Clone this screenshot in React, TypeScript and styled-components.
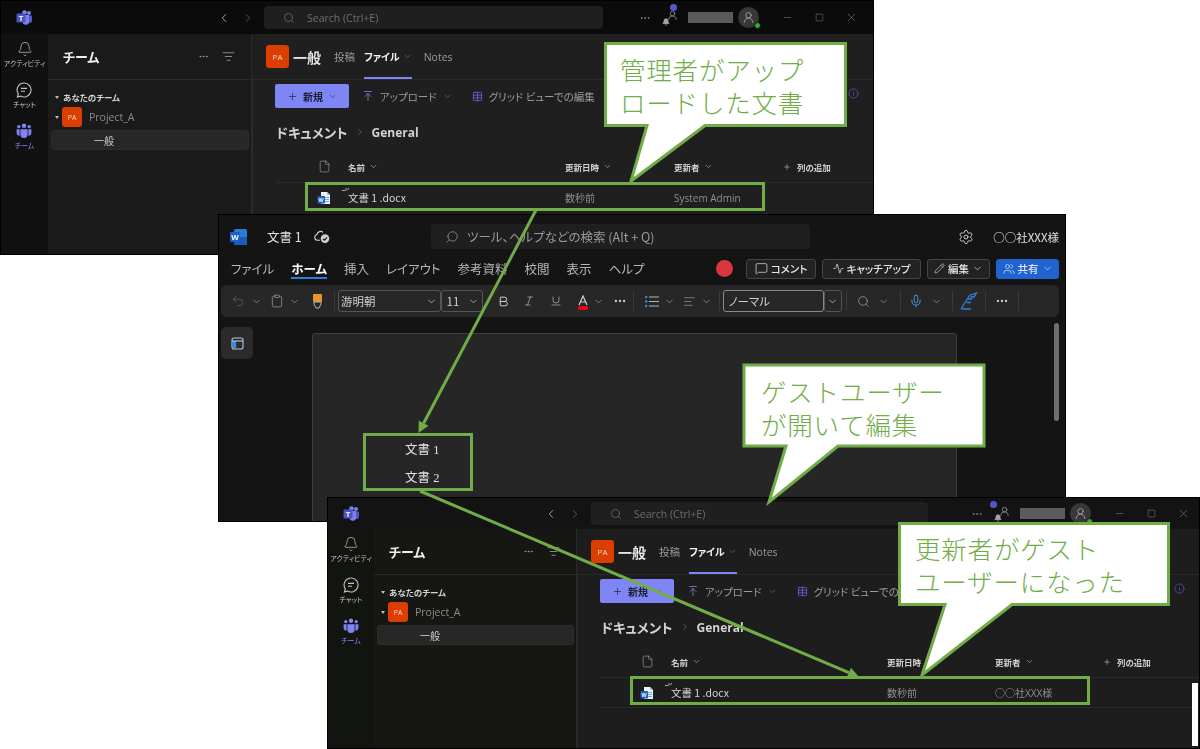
import React from "react";
import styled, { createGlobalStyle } from "styled-components";
import {
  AlignLeft, ArrowUpToLine, Bold, ChevronDown, ChevronLeft, ChevronRight, Clipboard, File, Info, Italic,
  List, MessageSquare, Mic, Minus, MoreHorizontal, Pencil, Plus, Search, Settings, Square, Table,
  Underline, Undo2, UserRound, Users, X, ListFilter, Bell, Activity,
} from "lucide-react";

const GREEN = "#70ad47";
const FONT = `"Noto Sans CJK JP", "Noto Sans", sans-serif`;
const LATIN = `"Open Sans", "Noto Sans CJK JP", sans-serif`;

const Global = createGlobalStyle`
  html, body { margin: 0; padding: 0; background: #fff; overflow: hidden; }
  * { box-sizing: border-box; }
  body { font-family: ${LATIN}; font-feature-settings: "palt"; }
`;

const Stage = styled.div`
  position: relative;
  width: 1200px;
  height: 749px;
  background: #fff;
  overflow: hidden;
`;

const Win = styled.div<{ $x: number; $y: number; $w: number; $h: number; $z: number; $bg: string }>`
  position: absolute;
  left: ${(p) => p.$x}px;
  top: ${(p) => p.$y}px;
  width: ${(p) => p.$w}px;
  height: ${(p) => p.$h}px;
  z-index: ${(p) => p.$z};
  background: ${(p) => p.$bg};
  border: 1px solid #000;
  display: flex;
  flex-direction: column;
  overflow: hidden;
  filter: blur(0.35px);
  color: #d6d6d6;
`;

/* ---------- Teams ---------- */
type Palette = {
  title: string; rail: string; side: string; main: string; line: string;
};
const Titlebar = styled.div<{ $h: number; $bg: string; $right: number }>`
  position: relative;
  flex: 0 0 ${(p) => p.$h}px;
  background: ${(p) => p.$bg};
  display: flex;
  align-items: center;
  padding: 0 ${(p) => p.$right}px 0 15px;
  color: #8d8d8d;
`;
const LogoSlot = styled.div`
  width: 196px;
  display: flex;
  align-items: center;
`;
const NavBtn = styled.div<{ $dim?: boolean }>`
  width: 24px;
  display: flex;
  justify-content: center;
  color: ${(p) => (p.$dim ? "#5f5f5f" : "#b5b5b5")};
`;
const TeamsSearch = styled.div<{ $w: number }>`
  width: ${(p) => p.$w}px;
  height: 23px;
  margin-left: 4px;
  background: #1f1f1f;
  border-radius: 4px;
  display: flex;
  align-items: center;
  padding-left: 19px;
  gap: 12px;
  font-size: 10.5px;
  color: #6f6f6f;
`;
const TitleTools = styled.div`
  margin-left: auto;
  display: flex;
  align-items: center;
`;
const Dot = styled.span<{ $r: number }>`
  position: absolute;
  top: 3px;
  right: ${(p) => p.$r}px;
  width: 7px;
  height: 7px;
  border-radius: 50%;
  background: #5558c6;
`;
const BellUser = styled.div`
  position: relative;
  width: 16px;
  height: 18px;
  margin-left: 11px;
  color: #a8a8a8;
`;
const NameBlock = styled.div`
  width: 45px;
  height: 11px;
  margin-left: 10px;
  background: #5b5b5b;
`;
const AvatarRound = styled.div`
  position: relative;
  width: 21px;
  height: 21px;
  margin-left: 5px;
  margin-right: 12px;
  border-radius: 50%;
  background: #383838;
  color: #b4b4b4;
  display: flex;
  align-items: center;
  justify-content: center;
`;
const Status = styled.span`
  position: absolute;
  right: -2px;
  bottom: -1px;
  width: 7px;
  height: 7px;
  border-radius: 50%;
  background: #2fae3a;
  border: 1px solid #111;
`;
const WinBtn = styled.div`
  width: 32px;
  display: flex;
  justify-content: center;
  color: #7c7c7c;
`;
const Body = styled.div`
  flex: 1;
  display: flex;
  min-height: 0;
`;
const Rail = styled.div<{ $w: number; $bg: string }>`
  flex: 0 0 ${(p) => p.$w}px;
  background: ${(p) => p.$bg};
  display: flex;
  flex-direction: column;
  align-items: center;
  padding-top: 7px;
`;
const RailItem = styled.div<{ $on?: boolean }>`
  height: 41px;
  display: flex;
  flex-direction: column;
  align-items: center;
  gap: 1px;
  color: ${(p) => (p.$on ? "#7f85f5" : "#c4c4c4")};
  white-space: nowrap;
  font-family: ${FONT};
  font-size: 7px;
  line-height: 10px;
`;
const Sidebar = styled.div<{ $w: number; $bg: string; $line: string }>`
  flex: 0 0 ${(p) => p.$w}px;
  background: ${(p) => p.$bg};
  border-right: 1px solid ${(p) => p.$line};
  display: flex;
  flex-direction: column;
`;
const SideHead = styled.div<{ $line: string }>`
  flex: 0 0 46px;
  display: flex;
  align-items: center;
  padding: 0 16px 0 15px;
  border-bottom: 1px solid ${(p) => p.$line};
  color: #aaa;
`;
const SideTitle = styled.div`
  flex: 1;
  font-family: ${FONT};
  font-weight: 700;
  font-size: 13px;
  color: #eee;
`;
const SideTools = styled.div`
  display: flex;
  align-items: center;
  gap: 13px;
`;
const SectionLabel = styled.div`
  margin: 10px 0 0 7px;
  height: 14px;
  display: flex;
  align-items: center;
  gap: 4px;
  font-family: ${FONT};
  font-size: 8.5px;
  font-weight: 700;
  color: #d4d4d4;
`;
const Caret = styled.span`
  width: 0;
  height: 0;
  border-left: 2.5px solid transparent;
  border-right: 2.5px solid transparent;
  border-top: 3.5px solid #bdbdbd;
`;
const TeamRow = styled.div`
  margin: 3px 0 0 7px;
  display: flex;
  align-items: center;
  gap: 3px;
  font-size: 10.5px;
  color: #8b8b8b;
`;
const PaBadge = styled.div<{ $s: number }>`
  width: ${(p) => p.$s}px;
  height: ${(p) => p.$s}px;
  flex: none;
  margin-right: 4px;
  border-radius: 3px;
  background: #dc3e00;
  color: #f5d8c8;
  font-size: ${(p) => (p.$s > 21 ? 8 : 7)}px;
  display: flex;
  align-items: center;
  justify-content: center;
`;
const Channel = styled.div`
  margin: 3px 2px 0 3px;
  height: 20px;
  background: #272727;
  border: 1px solid #2d2d2d;
  border-radius: 3px;
  padding-left: 42px;
  display: flex;
  align-items: center;
  font-family: ${FONT};
  font-size: 10px;
  color: #cfcfcf;
`;
const Main = styled.div<{ $bg: string }>`
  flex: 1;
  min-width: 0;
  background: ${(p) => p.$bg};
  display: flex;
  flex-direction: column;
`;
const MainHead = styled.div<{ $line: string }>`
  position: relative;
  flex: 0 0 46px;
  display: flex;
  align-items: center;
  padding-left: 14px;
  border-bottom: 1px solid ${(p) => p.$line};
`;
const ChannelName = styled.div`
  font-family: ${FONT};
  font-weight: 700;
  font-size: 14px;
  color: #e6e6e6;
  margin-right: 13px;
`;
const Tab = styled.div<{ $on?: boolean; $lat?: boolean }>`
  position: relative;
  height: 100%;
  display: flex;
  align-items: center;
  gap: 3px;
  margin-right: ${(p) => (p.$on ? 12 : 9)}px;
  font-family: ${(p) => (p.$lat ? LATIN : FONT)};
  font-weight: ${(p) => (p.$on ? 700 : 400)};
  font-size: ${(p) => (p.$on ? 10 : 10.5)}px;
  color: ${(p) => (p.$on ? "#f2f2f2" : "#9a9a9a")};
  &::after {
    content: "";
    display: ${(p) => (p.$on ? "block" : "none")};
    position: absolute;
    left: 0;
    right: 0;
    bottom: 0;
    height: 2px;
    background: #7f85f5;
  }
`;
const MainBody = styled.div<{ $line: string }>`
  position: relative;
  flex: 1;
  border-left: 1px solid ${(p) => p.$line};
  padding-left: 22px;
  padding-top: 4px;
  min-height: 0;
`;
const CmdBar = styled.div`
  height: 24px;
  display: flex;
  align-items: center;
  font-family: ${FONT};
  font-size: 10.5px;
  color: #9b9b9b;
`;
const NewBtn = styled.div`
  width: 74px;
  height: 24px;
  background: #7f85f5;
  border-radius: 2px;
  color: #1c1c2c;
  display: flex;
  align-items: center;
  justify-content: center;
  gap: 5px;
  font-weight: 700;
  font-size: 10px;
  margin-right: 13px;
`;
const CmdGroup = styled.div<{ $c?: string; $mr?: number }>`
  display: flex;
  align-items: center;
  gap: 6px;
  margin-right: ${(p) => p.$mr ?? 21}px;
  white-space: nowrap;
  svg:first-child { color: ${(p) => p.$c ?? "inherit"}; }
`;
const InfoMark = styled.div`
  position: absolute;
  right: 14px;
  top: 8px;
  color: #5b5fc7;
  display: flex;
`;
const Crumbs = styled.div`
  margin-top: 14px;
  height: 20px;
  display: flex;
  align-items: center;
  gap: 7px;
  font-weight: 700;
  color: #d2d2d2;
`;
const CrumbMain = styled.span`
  font-family: ${FONT};
  font-size: 13.5px;
  margin-left: 1px;
`;
const CrumbSub = styled.span`
  font-size: 12px;
`;
const Grid = styled.div<{ $cols: string; $h: number; $line: string; $mt?: number }>`
  display: grid;
  grid-template-columns: ${(p) => p.$cols};
  height: ${(p) => p.$h}px;
  margin-top: ${(p) => p.$mt ?? 0}px;
  align-items: center;
  border-bottom: 1px solid ${(p) => p.$line};
  white-space: nowrap;
`;
const HeadCell = styled.div`
  display: flex;
  align-items: center;
  gap: 4px;
  font-family: ${FONT};
  font-weight: 700;
  font-size: 8.5px;
  color: #d0d0d0;
`;
const IconCell = styled.div`
  justify-self: end;
  padding-right: 17px;
  display: flex;
  color: #a9a9a9;
`;
const FileCell = styled.div`
  position: relative;
  font-family: ${FONT};
  font-size: 10.5px;
  color: #d6d6d6;
`;
const Cell = styled.div`
  font-size: 10px;
  color: #8f8f8f;
  font-family: ${LATIN};
`;
const Spark = styled.svg`
  position: absolute;
  left: -6px;
  top: -2px;
`;
const Scroller = styled.div`
  position: absolute;
  right: 1px;
  top: 108px;
  bottom: 2px;
  width: 6px;
  background: #fff;
`;

const TeamsLogo = () => (
  <svg width="17" height="15" viewBox="0 0 17 15">
    <circle cx="13" cy="3" r="2" fill="#7b83eb" />
    <circle cx="8.5" cy="2.5" r="2.3" fill="#7b83eb" />
    <path d="M11 5.5h5v5a2.5 2.5 0 0 1-5 0z" fill="#5059c9" />
    <path d="M5 5h8v6.5a3.2 3.2 0 0 1-6.4 0z" fill="#7b83eb" />
    <rect x="0.5" y="3.5" width="9" height="9" rx="1" fill="#4b53bc" />
    <text x="5" y="10.8" fontSize="7.5" fontWeight="700" fill="#fff" textAnchor="middle" fontFamily="Liberation Sans">T</text>
  </svg>
);
const WordFile = () => (
  <svg width="14" height="14" viewBox="0 0 14 14">
    <path d="M4 1h6l3 3v9H4z" fill="#eef3fa" />
    <path d="M10 1l3 3h-3z" fill="#9cc3ee" />
    <rect x="7" y="6" width="5" height="1" fill="#6fa5de" />
    <rect x="7" y="8" width="5" height="1" fill="#6fa5de" />
    <rect x="7" y="10" width="5" height="1" fill="#6fa5de" />
    <rect x="0.5" y="5" width="7.5" height="7.5" rx="1" fill="#1c5fc0" />
    <text x="4.2" y="10.8" fontSize="5.5" fontWeight="700" fill="#fff" textAnchor="middle" fontFamily="Liberation Sans">W</text>
  </svg>
);
const ChatIcon = () => (
  <svg width="16" height="16" viewBox="0 0 16 16" fill="none" stroke="currentColor" strokeWidth="1.1">
    <path d="M8 1a7 7 0 1 1-3.4 13.1L1.4 15l.9-3.1A7 7 0 0 1 8 1z" />
    <path d="M5 6.4h6M5 9.2h4" />
  </svg>
);
const PeopleIcon = () => (
  <svg width="16" height="16" viewBox="0 0 16 16" fill="currentColor">
    <circle cx="8" cy="2.8" r="2.2" />
    <circle cx="2.8" cy="3.6" r="1.7" />
    <circle cx="13.2" cy="3.6" r="1.7" />
    <path d="M4.4 6.3h7.2v5.2a3.6 3.6 0 0 1-7.2 0z" />
    <path d="M0.6 6.3h3v4.8c0 .6.1 1 .2 1.4A2.9 2.9 0 0 1 .6 9.7zM12.4 6.3h3v3.4a2.9 2.9 0 0 1-3.2 2.8c.1-.4.2-.8.2-1.4z" />
  </svg>
);

type TeamsProps = {
  x: number; y: number; w: number; h: number; z: number; titleH: number; rightPad: number;
  railW: number; sideW: number; searchW: number; cols: string; palette: Palette; dotR: number;
  editor: string; dateChevron: boolean; scroller?: boolean; rowLine?: boolean;
};

const TeamsWindow: React.FC<TeamsProps> = (p) => {
  const { palette: c } = p;
  return (
    <Win $x={p.x} $y={p.y} $w={p.w} $h={p.h} $z={p.z} $bg={c.main}>
      <Titlebar $h={p.titleH} $bg={c.title} $right={p.rightPad}>
        <LogoSlot><TeamsLogo /></LogoSlot>
        <NavBtn><ChevronLeft size={14} strokeWidth={1.5} /></NavBtn>
        <NavBtn $dim><ChevronRight size={14} strokeWidth={1.5} /></NavBtn>
        <TeamsSearch $w={p.searchW}>
          <Search size={12} strokeWidth={1.5} />
          <span>Search (Ctrl+E)</span>
        </TeamsSearch>
        <TitleTools>
          <MoreHorizontal size={12} strokeWidth={1.5} />
          <BellUser>
            <UserRound size={11} strokeWidth={1.5} style={{ position: "absolute", right: 0, top: 1 }} />
            <Bell size={8} strokeWidth={2} fill="currentColor" style={{ position: "absolute", left: 0, bottom: 1 }} />
          </BellUser>
          <NameBlock />
          <AvatarRound>
            <UserRound size={13} strokeWidth={1.4} />
            <Status />
          </AvatarRound>
          <WinBtn><Minus size={11} strokeWidth={1.3} /></WinBtn>
          <WinBtn><Square size={9} strokeWidth={1.4} /></WinBtn>
          <WinBtn><X size={13} strokeWidth={1.2} /></WinBtn>
        </TitleTools>
        <Dot $r={p.dotR} />
      </Titlebar>
      <Body>
        <Rail $w={p.railW} $bg={c.rail}>
          <RailItem><Bell size={16} strokeWidth={1.1} />アクティビティ</RailItem>
          <RailItem><ChatIcon />チャット</RailItem>
          <RailItem $on><PeopleIcon />チーム</RailItem>
        </Rail>
        <Sidebar $w={p.sideW} $bg={c.side} $line={c.line}>
          <SideHead $line={c.line}>
            <SideTitle>チーム</SideTitle>
            <SideTools>
              <MoreHorizontal size={11} strokeWidth={1.6} />
              <ListFilter size={13} strokeWidth={1.4} />
            </SideTools>
          </SideHead>
          <SectionLabel><Caret />あなたのチーム</SectionLabel>
          <TeamRow><Caret /><PaBadge $s={20}>PA</PaBadge>Project_A</TeamRow>
          <Channel>一般</Channel>
        </Sidebar>
        <Main $bg={c.main}>
          <MainHead $line={c.line}>
            <PaBadge $s={23}>PA</PaBadge>
            <ChannelName>一般</ChannelName>
            <Tab>投稿</Tab>
            <Tab $on>ファイル<ChevronDown size={9} strokeWidth={1.2} color="#a0a0a0" /></Tab>
            <Tab $lat>Notes</Tab>
          </MainHead>
          <MainBody $line={c.line}>
            <CmdBar>
              <NewBtn><Plus size={11} strokeWidth={1.4} />新規<ChevronDown size={9} strokeWidth={1.3} /></NewBtn>
              <CmdGroup $c="#8f94f8" $mr={20}><ArrowUpToLine size={12} strokeWidth={1.4} />アップロード<ChevronDown size={9} strokeWidth={1.2} /></CmdGroup>
              <CmdGroup $c="#6a70e6"><Table size={11} strokeWidth={1.6} />グリッド ビューでの編集</CmdGroup>
            </CmdBar>
            <InfoMark><Info size={11} strokeWidth={1.5} /></InfoMark>
            <Crumbs>
              <CrumbMain>ドキュメント</CrumbMain>
              <ChevronRight size={10} strokeWidth={1.2} color="#8a8a8a" />
              <CrumbSub>General</CrumbSub>
            </Crumbs>
            <Grid $cols={p.cols} $h={32} $line={c.line} $mt={9}>
              <IconCell><File size={13} strokeWidth={1.1} /></IconCell>
              <HeadCell>名前<ChevronDown size={9} strokeWidth={1.4} /></HeadCell>
              <HeadCell>更新日時{p.dateChevron && <ChevronDown size={9} strokeWidth={1.4} />}</HeadCell>
              <HeadCell>更新者<ChevronDown size={9} strokeWidth={1.4} /></HeadCell>
              <HeadCell><Plus size={8} strokeWidth={1.6} />&nbsp;列の追加</HeadCell>
            </Grid>
            <Grid $cols={p.cols} $h={30} $line={p.rowLine ? c.line : "transparent"}>
              <IconCell><WordFile /></IconCell>
              <FileCell>
                <Spark width="8" height="7" viewBox="0 0 8 7" stroke="#cfcfcf" strokeWidth="0.8">
                  <path d="M0 2.5h3.5M7 0L5 2.5M4 0v2" fill="none" />
                </Spark>
                文書 1 .docx
              </FileCell>
              <Cell>数秒前</Cell>
              <Cell>{p.editor}</Cell>
              <div />
            </Grid>
            {p.scroller && <Scroller />}
          </MainBody>
        </Main>
      </Body>
    </Win>
  );
};

/* ---------- Word ---------- */
const WTitle = styled.div`
  flex: 0 0 43px;
  display: flex;
  align-items: center;
  font-family: ${FONT};
`;
const WDocName = styled.div`
  width: 212px;
  display: flex;
  align-items: center;
  padding-left: 11px;
  gap: 20px;
  font-size: 12.5px;
  color: #e2e2e2;
`;
const WCloud = styled.svg`
  margin-left: -8px;
`;
const WSearch = styled.div`
  width: 379px;
  height: 25px;
  background: #1f1f1f;
  border-radius: 4px;
  display: flex;
  align-items: center;
  padding-left: 14px;
  gap: 8px;
  font-size: 12.5px;
  color: #9a9a9a;
`;
const WUser = styled.div`
  margin-left: auto;
  padding-right: 6px;
  display: flex;
  align-items: center;
  gap: 19px;
  font-size: 11.5px;
  color: #e0e0e0;
`;
const WTabs = styled.div`
  flex: 0 0 21px;
  display: flex;
  align-items: center;
  padding: 0 6px 0 12px;
  gap: 17px;
  font-family: ${FONT};
  font-size: 12.5px;
  color: #b6b6b6;
`;
const WTab = styled.div<{ $on?: boolean }>`
  position: relative;
  color: ${(p) => (p.$on ? "#fff" : "inherit")};
  font-weight: ${(p) => (p.$on ? 700 : 400)};
  white-space: nowrap;
  &::after {
    content: "";
    display: ${(p) => (p.$on ? "block" : "none")};
    position: absolute;
    left: 0;
    right: 0;
    bottom: -1px;
    height: 2px;
    background: #2a7de1;
  }
`;
const WActions = styled.div`
  margin-left: auto;
  display: flex;
  align-items: center;
  gap: 6px;
`;
const RecDot = styled.span`
  width: 17px;
  height: 17px;
  border-radius: 50%;
  background: #d9363e;
  margin-right: 7px;
`;
const WBtn = styled.div<{ $w: number; $primary?: boolean }>`
  width: ${(p) => p.$w}px;
  height: 20px;
  border-radius: 3px;
  border: 1px solid ${(p) => (p.$primary ? "#1f63d0" : "#444")};
  background: ${(p) => (p.$primary ? "#1f63d0" : "#222")};
  color: #e4e4e4;
  font-size: 10.5px;
  font-weight: 500;
  display: flex;
  align-items: center;
  justify-content: center;
  gap: 3px;
`;
const Ribbon = styled.div`
  flex: 0 0 32px;
  margin: 6px 6px 0 2px;
  background: #272727;
  border-radius: 6px;
  display: flex;
  align-items: center;
  padding-left: 8px;
  color: #a2a2a2;
`;
const Slot = styled.div<{ $w: number; $ml?: number; $c?: string }>`
  flex: 0 0 ${(p) => p.$w}px;
  margin-left: ${(p) => p.$ml ?? 0}px;
  display: flex;
  justify-content: center;
  color: ${(p) => p.$c ?? "inherit"};
`;
const Sep = styled.span<{ $ml?: number }>`
  flex: none;
  width: 1px;
  height: 20px;
  margin-left: ${(p) => p.$ml ?? 0}px;
  background: #3a3a3a;
`;
const FieldBox = styled.div<{ $w: number; $strong?: boolean; $ml?: number }>`
  flex: 0 0 ${(p) => p.$w}px;
  height: 22px;
  margin-left: ${(p) => p.$ml ?? 0}px;
  border: ${(p) => (p.$strong ? "1.5px solid #8a8a8a" : "1px solid #555")};
  border-radius: 3px;
  display: flex;
  align-items: center;
  justify-content: space-between;
  padding: 0 3px 0 2px;
  font-family: ${FONT};
  font-size: 11.5px;
  color: #cfcfcf;
`;
const Letter = styled.div`
  position: relative;
  display: flex;
  color: #cfcfcf;
`;
const RedBar = styled.span`
  position: absolute;
  left: 1px;
  right: 1px;
  bottom: -3px;
  height: 4px;
  border-radius: 1px;
  background: #e60012;
`;
const WBody = styled.div`
  position: relative;
  flex: 1;
  display: flex;
  min-height: 0;
`;
const PaneBtn = styled.div`
  flex: none;
  width: 32px;
  height: 32px;
  margin: 10px 0 0 2px;
  background: #2b2b2b;
  border-radius: 5px;
  color: #a9c6e6;
  display: flex;
  align-items: center;
  justify-content: center;
`;
const Page = styled.div`
  width: 645px;
  height: 300px;
  margin: 16px 0 0 59px;
  background: #262626;
  border: 1px solid #3f3f3f;
  border-radius: 3px 3px 0 0;
  padding: 102px 0 0 92px;
  font-family: "Liberation Serif", "Noto Sans CJK JP", serif;
  font-size: 12.5px;
  line-height: 28px;
  color: #e2e2e2;
`;
const WScroll = styled.div`
  position: absolute;
  right: 6px;
  top: 6px;
  width: 5px;
  height: 98px;
  border-radius: 3px;
  background: #6e6e6e;
`;

const WordLogo = () => (
  <svg width="17" height="16" viewBox="0 0 17 16">
    <rect x="4" y="0" width="13" height="16" rx="1.5" fill="#2b7cd3" />
    <rect x="4" y="8" width="13" height="8" fill="#185abd" />
    <rect x="0" y="3" width="10" height="10" rx="1" fill="#1a5fc4" />
    <text x="5" y="11" fontSize="8" fontWeight="700" fill="#fff" textAnchor="middle" fontFamily="Liberation Sans">W</text>
  </svg>
);
const Chev = ({ s = 11 }: { s?: number }) => <ChevronDown size={s} strokeWidth={1.5} />;
const Quill = () => (
  <svg width="18" height="18" viewBox="0 0 18 18" fill="none" stroke="#2f7fdc" strokeWidth="1.3">
    <path d="M1 17L9.5 3.5 16.5 1 14 5h-3.5M12.5 7H8M11 10.5H6.5M2 17h9" />
  </svg>
);
const ListDots = () => (
  <svg width="14" height="13" viewBox="0 0 14 13" stroke="#b5b5b5" strokeWidth="1.1">
    <path d="M4 2h10M4 6.5h10M4 11h10" />
    <g fill="#2f8fe8" stroke="none"><circle cx="1.2" cy="2" r="1.2" /><circle cx="1.2" cy="6.5" r="1.2" /><circle cx="1.2" cy="11" r="1.2" /></g>
  </svg>
);

const WordWindow = () => (
  <Win $x={218} $y={214} $w={848} $h={308} $z={2} $bg="#141414">
    <WTitle>
      <WDocName>
        <WordLogo />
        <span>文書 1</span>
        <WCloud width="17" height="16" viewBox="0 0 17 16" fill="none" stroke="#cfcfcf" strokeWidth="1.1">
          <path d="M9 3.4A3.6 3.6 0 0 0 3 5.4 3 3 0 0 0 3.6 11.3H6" />
          <circle cx="11" cy="9.6" r="4.3" fill="#cfcfcf" stroke="none" />
          <path d="M9 9.8l1.5 1.4L13 8.4" stroke="#141414" strokeWidth="1.1" />
        </WCloud>
      </WDocName>
      <WSearch>
        <Search size={14} strokeWidth={1.3} style={{ transform: "scaleX(-1)" }} />
        <span>ツール、ヘルプなどの検索 (Alt + Q)</span>
      </WSearch>
      <WUser>
        <Settings size={16} strokeWidth={1.3} />
        <span>○○社XXX様</span>
      </WUser>
    </WTitle>
    <WTabs>
      <WTab>ファイル</WTab>
      <WTab $on>ホーム</WTab>
      <WTab>挿入</WTab>
      <WTab>レイアウト</WTab>
      <WTab>参考資料</WTab>
      <WTab>校閲</WTab>
      <WTab>表示</WTab>
      <WTab>ヘルプ</WTab>
      <WActions>
        <RecDot />
        <WBtn $w={70}><MessageSquare size={13} strokeWidth={1.3} />コメント</WBtn>
        <WBtn $w={99}><Activity size={11} strokeWidth={1.6} />キャッチアップ</WBtn>
        <WBtn $w={63}><Pencil size={11} strokeWidth={1.3} />編集<Chev /></WBtn>
        <WBtn $w={63} $primary><Users size={12} strokeWidth={1.4} />共有<Chev /></WBtn>
      </WActions>
    </WTabs>
    <Ribbon>
      <Slot $w={18} $c="#666"><Undo2 size={14} strokeWidth={1.2} /></Slot>
      <Slot $w={18}><Chev /></Slot>
      <Slot $w={24}><Clipboard size={14} strokeWidth={1.2} /></Slot>
      <Slot $w={8}><Chev /></Slot>
      <Slot $w={34} $c="#e8952c"><svg width="11" height="15" viewBox="0 0 11 15"><rect x="1" y="0" width="9" height="8" rx="1" fill="#e8952c" /><path d="M2 8h7v2L7 14H4l-2-4z" fill="none" stroke="#b5b5b5" /></svg></Slot>
      <Sep />
      <FieldBox $w={103} $ml={3}>游明朝<Chev /></FieldBox>
      <FieldBox $w={42}>&nbsp;11<Chev /></FieldBox>
      <Slot $w={40}><Letter><Bold size={13} strokeWidth={1.8} /></Letter></Slot>
      <Slot $w={10}><Letter><Italic size={12} strokeWidth={1.2} /></Letter></Slot>
      <Slot $w={42}><Letter><Underline size={12} strokeWidth={1.2} /></Letter></Slot>
      <Slot $w={12}><Letter>
        <svg width="12" height="12" viewBox="0 0 12 12" fill="none" stroke="#d0d0d0" strokeWidth="1.2"><path d="M2 10L6 1l4 9M3.5 7h5" /></svg>
        <RedBar />
      </Letter></Slot>
      <Slot $w={18}><Chev /></Slot>
      <Slot $w={26}><MoreHorizontal size={14} strokeWidth={2} color="#d0d0d0" /></Slot>
      <Sep />
      <Slot $w={18} $ml={9}><ListDots /></Slot>
      <Slot $w={16}><Chev /></Slot>
      <Slot $w={24}><AlignLeft size={13} strokeWidth={1.2} /></Slot>
      <Slot $w={10}><Chev /></Slot>
      <Sep $ml={7} />
      <FieldBox $w={101} $strong $ml={3}><span>&nbsp;ノーマル</span></FieldBox>
      <FieldBox $w={14}><Chev /></FieldBox>
      <Sep $ml={4} />
      <Slot $w={30} $ml={1}><Search size={13} strokeWidth={1.3} /></Slot>
      <Slot $w={2}><Chev /></Slot>
      <Sep $ml={11} />
      <Slot $w={30}><Mic size={14} strokeWidth={1.5} color="#4f9be8" /></Slot>
      <Slot $w={2}><Chev /></Slot>
      <Sep $ml={10} />
      <Slot $w={32}><Quill /></Slot>
      <Sep />
      <Slot $w={32}><MoreHorizontal size={14} strokeWidth={2} color="#d0d0d0" /></Slot>
      <Sep />
      <Slot $w={14} $ml={54}><Chev s={12} /></Slot>
    </Ribbon>
    <WBody>
      <PaneBtn>
        <svg width="13" height="13" viewBox="0 0 13 13" fill="none" stroke="#b5c8dc" strokeWidth="1.1"><rect x="1" y="1" width="11" height="11" rx="2" /><rect x="1.8" y="4" width="3.4" height="7.4" fill="#2f8fe8" stroke="none" /><path d="M1 4h11" /></svg>
      </PaneBtn>
      <Page>
        <div>文書 1</div>
        <div>文書 2</div>
      </Page>
      <WScroll />
    </WBody>
  </Win>
);

/* ---------- Annotations ---------- */
const Overlay = styled.svg`
  position: absolute;
  inset: 0;
  z-index: 5;
  pointer-events: none;
`;
const CalloutText = styled.div<{ $x: number; $y: number }>`
  position: absolute;
  left: ${(p) => p.$x}px;
  top: ${(p) => p.$y}px;
  z-index: 6;
  color: ${GREEN};
  font-family: ${FONT};
  font-weight: 300;
  font-feature-settings: normal;
  font-size: 25.5px;
  line-height: 33px;
  letter-spacing: 0.8px;
  white-space: nowrap;
`;

const Marker = ({ x, y, w, h }: { x: number; y: number; w: number; h: number }) => (
  <rect x={x} y={y} width={w} height={h} fill="none" stroke={GREEN} strokeWidth={3} />
);
const Arrow = ({ x1, y1, x2, y2 }: { x1: number; y1: number; x2: number; y2: number }) => {
  const len = Math.hypot(x2 - x1, y2 - y1);
  const ux = (x2 - x1) / len;
  const uy = (y2 - y1) / len;
  const bx = x2 - ux * 11;
  const by = y2 - uy * 11;
  const head = `${x2},${y2} ${bx - uy * 5.5},${by + ux * 5.5} ${bx + uy * 5.5},${by - ux * 5.5}`;
  return (
    <g>
      <line x1={x1} y1={y1} x2={bx} y2={by} stroke={GREEN} strokeWidth={3} />
      <polygon points={head} fill={GREEN} />
    </g>
  );
};
const Bubble = ({ l, t, r, b, t1, t2, tx, ty }: { l: number; t: number; r: number; b: number; t1: number; t2: number; tx: number; ty: number }) => (
  <path
    d={`M${l} ${t}H${r}V${b}H${t2}L${tx} ${ty}L${t1} ${b}H${l}Z`}
    fill="#fff"
    stroke={GREEN}
    strokeWidth={3}
  />
);

const dark: Palette = { title: "#0b0b0b", rail: "#111111", side: "#1a1a1a", main: "#1f1f1f", line: "#2b2b2b" };
const dim: Palette = { title: "#131313", rail: "#121410", side: "#161713", main: "#1d1d1d", line: "#2a2a2a" };

export default function App() {
  return (
    <Stage>
      <Global />
      <TeamsWindow
        x={0} y={0} w={874} h={255} z={1} titleH={33} rightPad={6} railW={47} sideW={204} searchW={339}
        cols="73px 217px 109px 109px 1fr" palette={dark} dotR={196} editor="System Admin" dateChevron
      />
      <WordWindow />
      <TeamsWindow
        x={327} y={497} w={873} h={252} z={3} titleH={31} rightPad={0} railW={46} sideW={203} searchW={337}
        cols="71px 216px 108px 108px 1fr" palette={dim} dotR={202} editor="○○社XXX様" dateChevron={false} scroller rowLine
      />
      <Overlay width="1200" height="749" viewBox="0 0 1200 749">
        <Marker x={306.5} y={183.5} w={457} h={26} />
        <Marker x={364.5} y={434.5} w={107} h={55} />
        <Marker x={631.5} y={677.5} w={457} h={26} />
        <Arrow x1={536} y1={210} x2={418.5} y2={433} />
        <Arrow x1={420} y1={491} x2={859} y2={677} />
        <Bubble l={605.5} t={43.5} r={845.5} b={125.5} t1={647} t2={705} tx={631} ty={181} />
        <Bubble l={744} t={365} r={984} b={446} t1={786} t2={838} tx={769} ty={502} />
        <Bubble l={899.5} t={523.5} r={1168.5} b={604.5} t1={945} t2={1012} tx={922} ty={675} />
      </Overlay>
      <CalloutText $x={620} $y={52}>管理者がアップ<br />ロードした文書</CalloutText>
      <CalloutText $x={761} $y={374}>ゲストユーザー<br />が開いて編集</CalloutText>
      <CalloutText $x={915} $y={531}>更新者がゲスト<br />ユーザーになった</CalloutText>
    </Stage>
  );
}
